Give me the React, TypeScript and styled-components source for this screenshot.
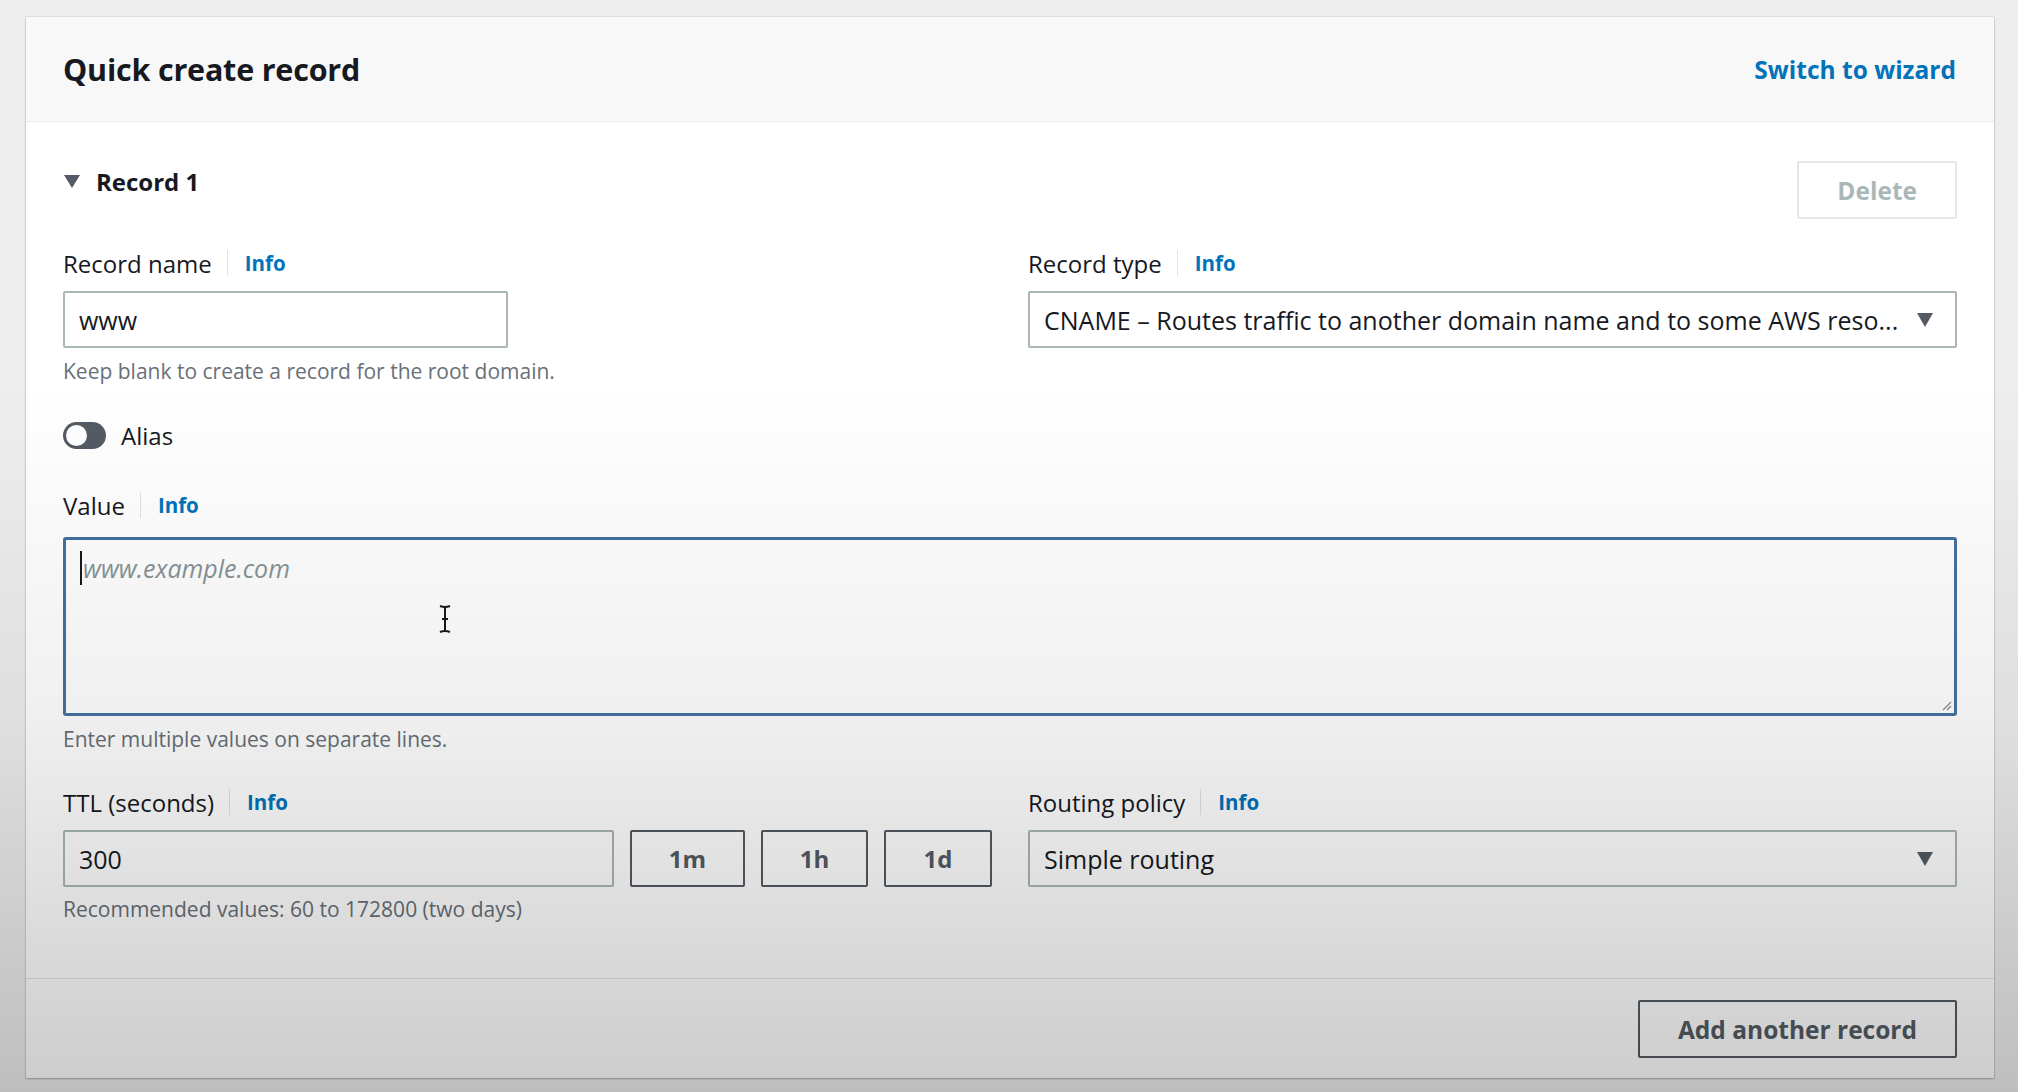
import styled, { createGlobalStyle } from 'styled-components';

const GlobalStyle = createGlobalStyle`
  html, body {
    margin: 0;
    padding: 0;
    background: #eeeeee;
    font-family: "Open Sans", "Noto Sans", sans-serif;
    color: #16191f;
  }
  body::after {
    content: '';
    position: fixed;
    inset: 0;
    pointer-events: none;
    background: linear-gradient(
      to bottom,
      rgba(0, 0, 0, 0) 0%,
      rgba(0, 0, 0, 0) 35%,
      rgba(0, 0, 0, 0.06) 65%,
      rgba(0, 0, 0, 0.2) 100%
    );
  }
`;

const Page = styled.div`
  padding: 17px 24px 14px 26px;
  box-sizing: border-box;
  height: 1092px;
`;

const Card = styled.div`
  background: #ffffff;
  box-shadow: 0 1px 2px rgba(0, 0, 0, 0.25), 0 0 0 1px rgba(0, 0, 0, 0.05);
  display: flex;
  flex-direction: column;
  height: 1061px;
`;

const Header = styled.div`
  height: 105px;
  box-sizing: border-box;
  padding: 0 38px 0 37px;
  display: flex;
  align-items: center;
  justify-content: space-between;
  background: #f8f8f8;
  border-bottom: 1px solid #eaeded;
`;

const Title = styled.h2`
  margin: 0;
  font-size: 30.5px;
  font-weight: 700;
  letter-spacing: -0.2px;
`;

const LinkText = styled.a`
  color: #0073bb;
  font-weight: 700;
  font-size: 24.5px;
  text-decoration: none;
  cursor: pointer;
`;

const Body = styled.div`
  flex: 1;
  padding: 39px 37px 0 37px;
`;

const RecordRow = styled.div`
  display: flex;
  justify-content: space-between;
  align-items: flex-start;
`;

const RecordTitle = styled.div`
  display: flex;
  align-items: center;
  gap: 16px;
  margin-top: 4px;
  font-size: 24px;
  font-weight: 700;
  height: 32px;
`;

const Caret = styled.span`
  width: 0;
  height: 0;
  border-left: 8px solid transparent;
  border-right: 8px solid transparent;
  border-top: 13px solid #545b64;
  margin-left: 1px;
`;

const Button = styled.button<{ $disabled?: boolean }>`
  height: 58px;
  padding: 0 ${(p) => (p.$disabled ? '38px' : '38px')};
  box-sizing: border-box;
  border: 2px solid ${(p) => (p.$disabled ? '#e4e8e8' : '#545b64')};
  border-radius: 2px;
  background: transparent;
  color: ${(p) => (p.$disabled ? '#aab7b8' : '#545b64')};
  font-family: inherit;
  font-size: 24.5px;
  font-weight: 700;
  cursor: pointer;
`;

const Grid = styled.div<{ $mt: number }>`
  display: grid;
  grid-template-columns: 1fr 1fr;
  column-gap: 36px;
  margin-top: ${(p) => p.$mt}px;
`;

const Field = styled.div<{ $mt?: number }>`
  display: flex;
  flex-direction: column;
  align-items: stretch;
  margin-top: ${(p) => p.$mt ?? 0}px;
`;

const LabelRow = styled.div<{ $gap: number }>`
  display: flex;
  align-items: center;
  height: 30px;
  margin-bottom: ${(p) => p.$gap}px;
`;

const Label = styled.span`
  font-size: 24px;
  color: #16191f;
`;

const Sep = styled.span`
  width: 1px;
  height: 26px;
  background: #e1e4e4;
  margin: 0 17px 0 15px;
`;

const Info = styled.span`
  color: #0073bb;
  font-weight: 700;
  font-size: 20.5px;
`;

const Input = styled.div<{ $w?: number; $grow?: boolean }>`
  height: 57px;
  box-sizing: border-box;
  ${(p) => (p.$w ? `width: ${p.$w}px;` : '')}
  ${(p) => (p.$grow ? 'flex: 1;' : 'flex: none;')}
  border: 2px solid #aab7b8;
  border-radius: 2px;
  background: #ffffff;
  display: flex;
  align-items: center;
  padding: 0 14px;
  font-size: 25px;
  color: #16191f;
`;

const Select = styled(Input)`
  justify-content: space-between;
  padding: 0 22px 0 14px;
  white-space: nowrap;
  overflow: hidden;
`;

const SelectCaret = styled.span`
  flex: none;
  width: 0;
  height: 0;
  border-left: 8px solid transparent;
  border-right: 8px solid transparent;
  border-top: 14px solid #545b64;
  margin-left: 18px;
`;

const Helper = styled.div<{ $mt: number }>`
  margin-top: ${(p) => p.$mt}px;
  font-size: 21px;
  color: #687078;
  line-height: 24px;
`;

const ToggleRow = styled.div`
  display: flex;
  align-items: center;
  gap: 15px;
  margin-top: 38px;
  height: 28px;
`;

const Toggle = styled.span`
  width: 43px;
  height: 27px;
  border-radius: 14px;
  background: #545b64;
  box-sizing: border-box;
  padding: 3px;
  display: flex;
  align-items: center;

  &::before {
    content: '';
    width: 21px;
    height: 21px;
    border-radius: 50%;
    background: #ffffff;
  }
`;

const ToggleLabel = styled.span`
  font-size: 24px;
`;

const TextArea = styled.div`
  height: 179px;
  box-sizing: border-box;
  border: 3px solid #44739f;
  border-radius: 3px;
  background: #ffffff;
  padding: 13px 14px;
  position: relative;
`;

const Placeholder = styled.span`
  font-size: 25px;
  font-style: italic;
  color: #879596;
  border-left: 2px solid #16191f;
  padding-left: 1px;
  line-height: 30px;
`;

const Resize = styled.svg`
  position: absolute;
  right: 2px;
  bottom: 2px;
`;

const Cursor = styled.svg`
  position: absolute;
  left: 372px;
  top: 64px;
`;

const TtlRow = styled.div`
  display: flex;
  gap: 16px;
`;

const ChipButton = styled.button<{ $w: number }>`
  width: ${(p) => p.$w}px;
  height: 57px;
  box-sizing: border-box;
  border: 2px solid #545b64;
  border-radius: 2px;
  background: transparent;
  color: #545b64;
  font-family: inherit;
  font-size: 24px;
  font-weight: 700;
`;

const Footer = styled.div`
  height: 100px;
  box-sizing: border-box;
  border-top: 1px solid #e4e4e4;
  padding: 21px 37px 0 37px;
  display: flex;
  justify-content: flex-end;
  align-items: flex-start;
`;

function FieldLabel({ text, gap }: { text: string; gap: number }) {
  return (
    <LabelRow $gap={gap}>
      <Label>{text}</Label>
      <Sep />
      <Info>Info</Info>
    </LabelRow>
  );
}

export default function App() {
  return (
    <>
      <GlobalStyle />
      <Page>
        <Card>
          <Header>
            <Title>Quick create record</Title>
            <LinkText>Switch to wizard</LinkText>
          </Header>
          <Body>
            <RecordRow>
              <RecordTitle>
                <Caret />
                Record 1
              </RecordTitle>
              <Button $disabled>Delete</Button>
            </RecordRow>

            <Grid $mt={29}>
              <Field>
                <FieldLabel text="Record name" gap={13} />
                <Input $w={445}>www</Input>
                <Helper $mt={11}>Keep blank to create a record for the root domain.</Helper>
              </Field>
              <Field>
                <FieldLabel text="Record type" gap={13} />
                <Select>
                  <span>CNAME – Routes traffic to another domain name and to some AWS reso...</span>
                  <SelectCaret />
                </Select>
              </Field>
            </Grid>

            <ToggleRow>
              <Toggle />
              <ToggleLabel>Alias</ToggleLabel>
            </ToggleRow>

            <Field $mt={41}>
              <FieldLabel text="Value" gap={17} />
              <TextArea>
                <Placeholder>www.example.com</Placeholder>
                <Cursor width="14" height="30" viewBox="0 0 14 30">
                  <path d="M2 2 Q7 4 12 2 M7 3 V27 M2 28 Q7 26 12 28 M4 15 H10" stroke="#16191f" strokeWidth="2" fill="none" />
                </Cursor>
                <Resize width="12" height="12" viewBox="0 0 12 12">
                  <path d="M11 3 L3 11 M11 7 L7 11" stroke="#8a9596" strokeWidth="1.4" />
                </Resize>
              </TextArea>
              <Helper $mt={11}>Enter multiple values on separate lines.</Helper>
            </Field>

            <Grid $mt={36}>
              <Field>
                <FieldLabel text="TTL (seconds)" gap={13} />
                <TtlRow>
                  <Input $grow>300</Input>
                  <ChipButton $w={115}>1m</ChipButton>
                  <ChipButton $w={107}>1h</ChipButton>
                  <ChipButton $w={108}>1d</ChipButton>
                </TtlRow>
                <Helper $mt={10}>Recommended values: 60 to 172800 (two days)</Helper>
              </Field>
              <Field>
                <FieldLabel text="Routing policy" gap={13} />
                <Select>
                  <span>Simple routing</span>
                  <SelectCaret />
                </Select>
              </Field>
            </Grid>
          </Body>
          <Footer>
            <Button>Add another record</Button>
          </Footer>
        </Card>
      </Page>
    </>
  );
}
